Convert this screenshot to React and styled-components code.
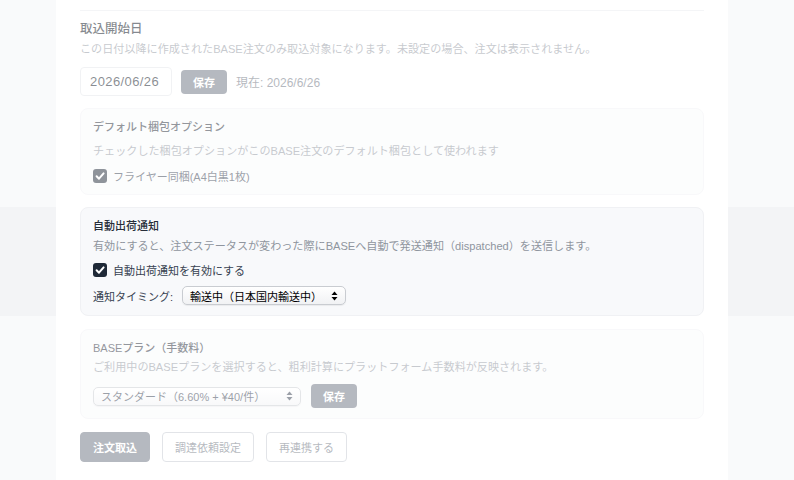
import React from "react";
import styled, { createGlobalStyle } from "styled-components";

const GlobalStyle = createGlobalStyle`
  html, body {
    margin: 0;
    padding: 0;
    overflow: hidden;
    background: #f3f4f6;
    font-family: "Liberation Sans", "Noto Sans CJK JP", sans-serif;
    -webkit-font-smoothing: antialiased;
  }
  * { box-sizing: border-box; }
`;

const CheckIcon = () => (
  <svg width="14" height="14" viewBox="0 0 14 14">
    <path d="M3.6 7.3 L6 9.7 L10.6 4.4" fill="none" stroke="#fff" strokeWidth="2" strokeLinecap="round" strokeLinejoin="round" />
  </svg>
);

const UpDown = () => (
  <svg width="7" height="10" viewBox="0 0 7 10">
    <path d="M3.5 0.5 L6.5 4 H0.5 Z" fill="currentColor" />
    <path d="M0.5 6 H6.5 L3.5 9.5 Z" fill="currentColor" />
  </svg>
);

const App = () => {
  return (
    <>
      <GlobalStyle />
      <Page>
        <Card>
          <PrevSection />
          <Section>
            <SectionTitle>取込開始日</SectionTitle>
            <Hint $mt={2}>
              この日付以降に作成されたBASE注文のみ取込対象になります。未設定の場合、注文は表示されません。
            </Hint>
            <DateRow>
              <DateInput>2026/06/26</DateInput>
              <SaveButton>保存</SaveButton>
              <Current>現在: 2026/6/26</Current>
            </DateRow>
          </Section>

          <Panel>
            <PanelTitle>デフォルト梱包オプション</PanelTitle>
            <Hint $mt={8}>チェックした梱包オプションがこのBASE注文のデフォルト梱包として使われます</Hint>
            <CheckRow $mt={9}>
              <Box><CheckIcon /></Box>
              フライヤー同梱(A4白黒1枚)
            </CheckRow>
          </Panel>

          <Panel $spotlight>
            <PanelTitle>自動出荷通知</PanelTitle>
            <Hint $mt={4}>有効にすると、注文ステータスが変わった際にBASEへ自動で発送通知（dispatched）を送信します。</Hint>
            <CheckRow $mt={8}>
              <Box><CheckIcon /></Box>
              自動出荷通知を有効にする
            </CheckRow>
            <TimingRow>
              <Label>通知タイミング:</Label>
              <Select $width={164} $strong>
                <span>輸送中（日本国内輸送中）</span>
                <UpDown />
              </Select>
            </TimingRow>
          </Panel>

          <Panel $mt={13}>
            <PanelTitle>BASEプラン（手数料）</PanelTitle>
            <Hint $mt={3}>ご利用中のBASEプランを選択すると、粗利計算にプラットフォーム手数料が反映されます。</Hint>
            <PlanRow>
              <Select $width={208}>
                <span>スタンダード（6.60% + ¥40/件）</span>
                <UpDown />
              </Select>
              <SaveButton>保存</SaveButton>
            </PlanRow>
          </Panel>

          <Actions>
            <ActionButton $primary>注文取込</ActionButton>
            <ActionButton>調達依頼設定</ActionButton>
            <ActionButton>再連携する</ActionButton>
          </Actions>
        </Card>
      </Page>
    </>
  );
};

export default App;

const Page = styled.div`
  height: 100vh;
  padding: 0 66px 0 56px;
`;

const Card = styled.div`
  background: #fff;
  height: 100%;
  padding: 0 24px;
`;

const PrevSection = styled.div`
  height: 11px;
  border-bottom: 1px solid #e9ebee;
`;

const Section = styled.div`
  padding-top: 8px;
`;

const SectionTitle = styled.div`
  font-size: 12.5px;
  line-height: 20px;
  font-weight: 500;
  color: #0b1220;
`;

const Hint = styled.div`
  margin-top: ${(p) => p.$mt || 0}px;
  font-size: 11.1px;
  line-height: 16px;
  color: #8f959e;
  white-space: nowrap;
`;

const DateRow = styled.div`
  display: flex;
  align-items: center;
  gap: 9px;
  margin-top: 10px;
`;

const DateInput = styled.div`
  width: 92px;
  height: 29px;
  border: 1px solid #e3e5e9;
  border-radius: 4px;
  display: flex;
  align-items: center;
  padding: 0 9px;
  font-size: 13px;
  letter-spacing: 0.4px;
  color: #111827;
`;

const SaveButton = styled.button`
  height: 24px;
  padding: 0 12px;
  border: none;
  border-radius: 4px;
  background: #6b7280;
  color: #fff;
  font-family: inherit;
  font-size: 11px;
  font-weight: 700;
`;

const Current = styled.span`
  font-size: 12px;
  color: #6b7280;
`;

const Panel = styled.div`
  position: relative;
  margin-top: ${(p) => p.$mt || 12}px;
  padding: 10px 12px;
  border: 1px solid #f0f1f4;
  border-radius: 8px;
  background: ${(p) => (p.$spotlight ? "#f8f9fb" : "#f9fafb")};
  z-index: ${(p) => (p.$spotlight ? 5 : "auto")};

  ${(p) =>
    p.$spotlight &&
    `
    &::before, &::after {
      content: "";
      position: absolute;
      left: -81px;
      right: -91px;
      background: rgba(255, 255, 255, 0.5);
      pointer-events: none;
    }
    &::before { bottom: calc(100% + 1px); height: 207px; }
    &::after { top: calc(100% + 1px); height: 164px; }
  `}
`;

const PanelTitle = styled.div`
  font-size: 11px;
  line-height: 16px;
  font-weight: 500;
  color: #262d38;
`;

const CheckRow = styled.label`
  display: flex;
  align-items: center;
  gap: 6px;
  height: 16px;
  margin-top: ${(p) => p.$mt || 0}px;
  font-size: 11px;
  color: #374151;
`;

const Box = styled.span`
  width: 14px;
  height: 14px;
  border-radius: 3px;
  background: #1f2937;
  display: flex;
  align-items: center;
  justify-content: center;
`;

const TimingRow = styled.div`
  display: flex;
  align-items: center;
  gap: 9px;
  margin-top: 8px;
  height: 19px;
`;

const Label = styled.span`
  font-size: 11px;
  color: #374151;
`;

const Select = styled.div`
  width: ${(p) => p.$width}px;
  height: 19px;
  display: flex;
  align-items: center;
  justify-content: space-between;
  padding: 0 7px 0 7px;
  border: 1px solid #c9ccd1;
  border-radius: 5px;
  background: linear-gradient(#ffffff, #f1f2f4);
  box-shadow: 0 1px 1px rgba(0, 0, 0, 0.06);
  font-size: 11px;
  color: ${(p) => (p.$strong ? "#000" : "#374151")};
`;

const PlanRow = styled.div`
  display: flex;
  align-items: center;
  gap: 10px;
  margin-top: 9px;
`;

const Actions = styled.div`
  display: flex;
  gap: 12px;
  margin-top: 13px;
`;

const ActionButton = styled.button`
  height: 30px;
  padding: 0 12px;
  border-radius: 4px;
  font-family: inherit;
  font-size: 11px;
  border: 1px solid ${(p) => (p.$primary ? "#6b7280" : "#c4c9d1")};
  background: ${(p) => (p.$primary ? "#6b7280" : "#fff")};
  color: ${(p) => (p.$primary ? "#fff" : "#6b7280")};
  font-weight: ${(p) => (p.$primary ? 700 : 400)};
`;
